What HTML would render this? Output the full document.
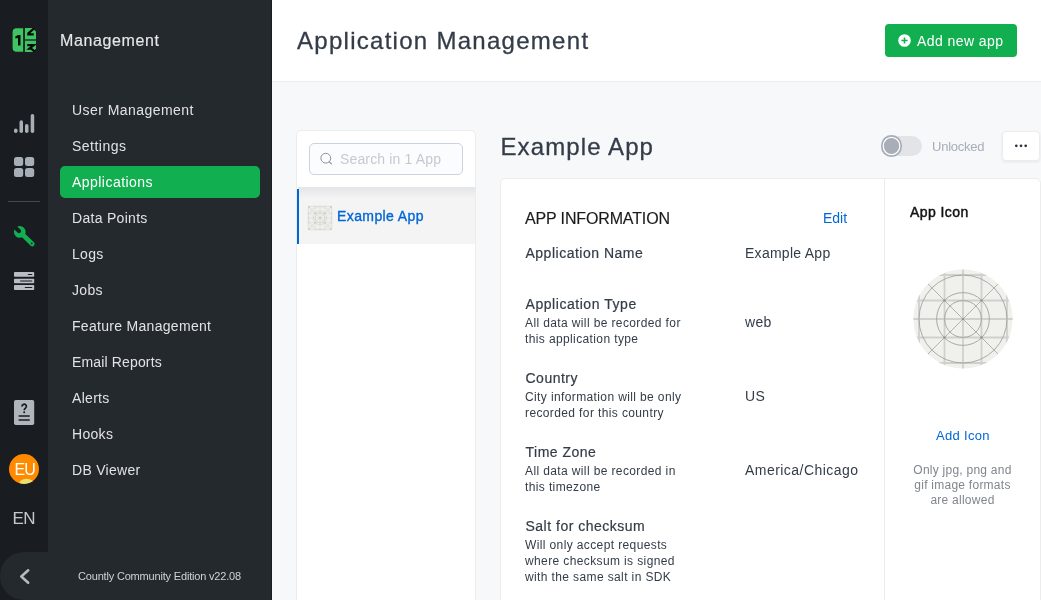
<!DOCTYPE html>
<html><head><meta charset="utf-8">
<style>
*{box-sizing:border-box;margin:0;padding:0}
html,body{width:1041px;height:600px;overflow:hidden;-webkit-font-smoothing:antialiased;background:#F7F8FA;font-family:"Liberation Sans",sans-serif}
.abs{position:absolute}
.t{position:absolute;white-space:nowrap;line-height:1}
#iconbar{left:0;top:0;width:48px;height:600px;background:#191C20}
#submenu{left:48px;top:0;width:224px;height:600px;background:#24292E}
#shadow{left:271px;top:0;width:1px;height:600px;background:#1a1d21}
#collapse{left:0;top:552px;width:60px;height:48px;background:#24292E;border-radius:24px 0 0 24px}
.mi{position:absolute;left:72px;font-size:14px;color:#E1E2E4;white-space:nowrap;line-height:1}
#active{left:60px;top:166px;width:200px;height:32px;background:#12AF51;border-radius:5px}
#header{left:272px;top:0;width:769px;height:82px;background:#fff;border-bottom:1px solid #ECECEC}
#listpanel{left:296px;top:130px;width:180px;height:480px;background:#fff;border:1px solid #ECECEC;border-radius:5px}
#search{left:309px;top:143px;width:154px;height:32px;background:#FBFCFD;border:1px solid #CBD2E0;border-radius:5px}
#sel{left:298px;top:187px;width:177px;height:57px;background:#F4F4F4}
#selshadow{left:298px;top:187px;width:177px;height:12px;background:linear-gradient(#E4E5E7,#F4F4F4)}
#selbar{left:297px;top:189px;width:2px;height:55px;background:#0166D6}
#card{left:500px;top:178px;width:541px;height:440px;background:#fff;border:1px solid #ECECEC;border-radius:5px}
#divider{left:884px;top:179px;width:1px;height:421px;background:#ECECEC}
.lbl{position:absolute;left:525.5px;font-size:14px;color:#333C48;-webkit-text-stroke:0.2px #333C48;white-space:nowrap;line-height:1}
.desc{position:absolute;left:525px;font-size:12px;color:#333C48;white-space:nowrap;line-height:16px}
.val{position:absolute;left:745px;font-size:14px;color:#333C48;white-space:nowrap;line-height:1}
</style></head><body><div id="root" style="position:absolute;left:0;top:0;width:1041px;height:600px;will-change:transform">
<div id="iconbar" class="abs"></div>
<div id="submenu" class="abs"></div>
<div id="collapse" class="abs"></div>
<div id="shadow" class="abs"></div>

<!-- logo -->
<svg class="abs" style="left:12px;top:28px" width="24" height="24" viewBox="0 0 24 24">
 <path d="M4.5 0.2 H11.3 V23.8 H4.5 Q0.6 23.8 0.6 19.8 V4.2 Q0.6 0.2 4.5 0.2Z" fill="#3EC462"/>
 <path d="M12.8 0 H20.5 L24 3.5 V11.2 H12.8Z" fill="#3EC462"/>
 <path d="M12.8 12.8 H24 V20.5 L20.8 24 H12.8Z" fill="#3EC462"/>
 <path d="M11.3 0 H12.8 V24 H11.3Z" fill="#1E2A22"/>
 <path d="M12.8 11.2 H24 V12.8 H12.8Z" fill="#2A5A3A"/>
 <path d="M3.4 8.2 L6.3 7 H8.5 V17.4 H6 V9.9 L3.4 10.4Z" fill="#0A0A0A"/>
 <path d="M21.8 0.6 L16 5.6 M15.2 6.3 H21.7" stroke="#0A0A0A" stroke-width="2.2" fill="none"/>
 <path d="M15.2 17.2 H21.6 L17.4 20.6 H19.2 L22.6 23.6" stroke="#0A0A0A" stroke-width="2.2" fill="none"/>
</svg>

<div class="t" style="left:60px;top:33px;font-size:16px;color:#E6E7E8;letter-spacing:0.62px;-webkit-text-stroke:0.15px #E6E7E8">Management</div>

<!-- icons -->
<svg class="abs" style="left:12px;top:112px" width="24" height="24" viewBox="0 0 24 24">
 <g fill="#A8AEB6"><rect x="2" y="16.5" width="3.5" height="4.5" rx="1.75"/><rect x="7.5" y="8.3" width="3.5" height="12.7" rx="1.75"/><rect x="13" y="12" width="3.5" height="9" rx="1.75"/><rect x="18.7" y="2" width="3.5" height="19" rx="1.75"/></g>
</svg>
<svg class="abs" style="left:12px;top:155px" width="24" height="24" viewBox="0 0 24 24">
 <g fill="#A8AEB6"><rect x="2" y="2" width="9.2" height="9.1" rx="2.5"/><rect x="13" y="2" width="9.2" height="9.1" rx="2.5"/><rect x="2" y="13" width="9.2" height="9" rx="2.5"/><rect x="13" y="13" width="9.2" height="9" rx="2.5"/></g>
</svg>
<div class="abs" style="left:8px;top:201px;width:32px;height:1px;background:#45484C"></div>

<div id="active" class="abs"></div>
<div class="mi" style="top:103px;letter-spacing:0.44px">User Management</div>
<div class="mi" style="top:139px;letter-spacing:0.49px">Settings</div>
<div class="mi" style="top:175px;letter-spacing:0.46px;color:#fff">Applications</div>
<div class="mi" style="top:211px;letter-spacing:0.3px">Data Points</div>
<div class="mi" style="top:247px;letter-spacing:0.3px">Logs</div>
<div class="mi" style="top:283px;letter-spacing:0.3px">Jobs</div>
<div class="mi" style="top:319px;letter-spacing:0.3px">Feature Management</div>
<div class="mi" style="top:355px;letter-spacing:0.15px">Email Reports</div>
<div class="mi" style="top:391px;letter-spacing:0.3px">Alerts</div>
<div class="mi" style="top:427px;letter-spacing:0.3px">Hooks</div>
<div class="mi" style="top:463px;letter-spacing:0.3px">DB Viewer</div>
<div class="t" style="left:78px;top:571px;font-size:11px;color:#D0D1D3;letter-spacing:-0.18px">Countly Community Edition v22.08</div>

<div id="header" class="abs"></div>
<div class="t" style="left:297px;top:28.5px;font-size:24px;color:#333C48;letter-spacing:1.28px;-webkit-text-stroke:0.3px #333C48">Application Management</div>

<div id="listpanel" class="abs"></div>
<div id="search" class="abs"></div>
<div id="sel" class="abs"></div>
<div id="selshadow" class="abs"></div>
<div id="selbar" class="abs"></div>

<div class="t" style="left:500.5px;top:134.5px;font-size:24px;color:#333C48;letter-spacing:1.1px;-webkit-text-stroke:0.3px #333C48">Example App</div>
<div id="card" class="abs"></div>
<div id="divider" class="abs"></div>

<!-- add new app button -->
<div class="abs" style="left:885px;top:24px;width:132px;height:33px;background:#12AF51;border-radius:4px"></div>
<svg class="abs" style="left:898px;top:34px" width="13" height="13" viewBox="0 0 13 13"><circle cx="6.5" cy="6.5" r="6.3" fill="#fff"/><path d="M6.5 3.4V9.6M3.4 6.5H9.6" stroke="#12AF51" stroke-width="1.6"/></svg>
<div class="t" style="left:917px;top:34px;font-size:14px;color:#fff;letter-spacing:0.43px">Add new app</div>

<!-- search -->
<svg class="abs" style="left:319px;top:151px" width="14" height="14" viewBox="0 0 14 14"><circle cx="6.8" cy="7.2" r="4.9" fill="none" stroke="#8A8F96" stroke-width="1"/><path d="M10.4 10.8L12.4 12.8" stroke="#8A8F96" stroke-width="1.1" stroke-linecap="round"/></svg>
<div class="t" style="left:340px;top:152px;font-size:14px;color:#C6C9CE;letter-spacing:0.15px">Search in 1 App</div>

<!-- list item -->
<svg class="abs" style="left:307px;top:205px" width="26" height="26" viewBox="0 0 26 26">
 <defs><clipPath id="li"><rect x="0.3" y="0.3" width="25.4" height="25.4" rx="3.5"/></clipPath></defs>
 <rect x="0.3" y="0.3" width="25.4" height="25.4" rx="3.5" fill="#EFEFEC"/>
 <g clip-path="url(#li)" fill="none">
  <path d="M1.4 0V26M8.2 0V26M13 0V26M17.8 0V26M24.6 0V26M0 1.4H26M0 8.2H26M0 13H26M0 17.8H26M0 24.6H26" stroke="#DDDDD9" stroke-width="0.7"/>
  <path d="M0 0L26 26M26 0L0 26" stroke="#CACAC6" stroke-width="0.5"/>
  <circle cx="13" cy="13" r="11.6" stroke="#D2D2CE" stroke-width="0.5"/><circle cx="13" cy="13" r="6.8" stroke="#CACAC6" stroke-width="0.5"/><circle cx="13" cy="13" r="4.8" stroke="#CACAC6" stroke-width="0.5"/>
 </g>
 <g fill="#B8B8B4"><circle cx="13" cy="13" r="0.7"/><circle cx="8.2" cy="8.2" r="0.6"/><circle cx="17.8" cy="8.2" r="0.6"/><circle cx="8.2" cy="17.8" r="0.6"/><circle cx="17.8" cy="17.8" r="0.6"/><circle cx="2.2" cy="2.2" r="0.6"/><circle cx="23.8" cy="2.2" r="0.6"/><circle cx="2.2" cy="23.8" r="0.6"/><circle cx="23.8" cy="23.8" r="0.6"/></g>
</svg>
<div class="t" style="left:337px;top:209px;font-size:14px;color:#0166D6;letter-spacing:0.4px;-webkit-text-stroke:0.35px #0166D6">Example App</div>

<!-- toggle -->
<div class="abs" style="left:882px;top:136px;width:40px;height:20px;background:#E2E4E8;border-radius:10px"></div>
<div class="abs" style="left:881px;top:135.3px;width:21.3px;height:21.3px;background:#A7AEB8;border-radius:50%;box-shadow:inset 0 0 0 1.7px #A7AEB8,inset 0 0 0 2.9px #fff"></div>
<div class="t" style="left:932px;top:140px;font-size:13px;color:#A7AEB8;letter-spacing:-0.24px">Unlocked</div>
<div class="abs" style="left:1002px;top:131px;width:38px;height:30px;background:#fff;border-radius:4px;border:1px solid #ECEDEF;box-shadow:0 1px 3px rgba(0,0,0,0.08)"></div>
<svg class="abs" style="left:1013px;top:143px" width="16" height="6" viewBox="0 0 16 6"><g fill="#2A3340"><circle cx="3.3" cy="2.8" r="1.35"/><circle cx="8" cy="2.8" r="1.35"/><circle cx="12.7" cy="2.8" r="1.35"/></g></svg>

<!-- card content -->
<div class="t" style="left:525px;top:211px;font-size:16px;color:#1A1A1A;letter-spacing:-0.14px;-webkit-text-stroke:0.15px #1A1A1A">APP INFORMATION</div>
<div class="t" style="left:823px;top:211px;font-size:14px;color:#0166D6">Edit</div>
<div class="lbl" style="top:246px;letter-spacing:0.5px">Application Name</div>
<div class="val" style="top:246px;letter-spacing:0.27px">Example App</div>

<div class="lbl" style="top:297px;letter-spacing:0.55px">Application Type</div>
<div class="desc" style="top:315px;letter-spacing:0.38px">All data will be recorded for<br>this application type</div>
<div class="val" style="top:315px;letter-spacing:0.27px">web</div>

<div class="lbl" style="top:371px;letter-spacing:0.5px">Country</div>
<div class="desc" style="top:389px;letter-spacing:0.38px">City information will be only<br>recorded for this country</div>
<div class="val" style="top:389px;letter-spacing:0.27px">US</div>

<div class="lbl" style="top:445px;letter-spacing:0.5px">Time Zone</div>
<div class="desc" style="top:463px;letter-spacing:0.38px">All data will be recorded in<br>this timezone</div>
<div class="val" style="top:463px;letter-spacing:0.46px">America/Chicago</div>

<div class="lbl" style="top:519px;letter-spacing:0.5px">Salt for checksum</div>
<div class="desc" style="top:537px;letter-spacing:0.38px">Will only accept requests<br>where checksum is signed<br>with the same salt in SDK</div>

<!-- right column -->
<div class="t" style="left:910px;top:205px;font-size:14px;color:#111;letter-spacing:0.42px;-webkit-text-stroke:0.45px #111">App Icon</div>
<svg class="abs" style="left:913px;top:269px" width="100" height="100" viewBox="-50 -50 100 100">
 <defs><clipPath id="cc"><circle r="49.6"/></clipPath></defs>
 <circle r="49.6" fill="#F0F0EC"/>
 <g clip-path="url(#cc)" fill="none">
  <path d="M-18.5 -50V50M0 -50V50M18.5 -50V50M-50 -18.5H50M-50 0H50M-50 18.5H50M-44 -50V50M44 -50V50M-50 -44H50M-50 44H50" stroke="#D0D0CC" stroke-width="1.8"/>
  <path d="M-50 -50L50 50M50 -50L-50 50" stroke="#A2A29E" stroke-width="0.8"/>
  <circle r="44" stroke="#A2A29E" stroke-width="0.9"/>
  <circle r="26.4" stroke="#A2A29E" stroke-width="0.9"/>
  <circle r="18.4" stroke="#A2A29E" stroke-width="0.9"/>
 </g>
 <g fill="#8A8A86"><circle r="1.1"/><circle cx="-18.5" cy="-18.5" r="1.1"/><circle cx="18.5" cy="-18.5" r="1.1"/><circle cx="-18.5" cy="18.5" r="1.1"/><circle cx="18.5" cy="18.5" r="1.1"/></g>
</svg>
<div class="t" style="left:936px;top:429px;font-size:13px;color:#0166D6;letter-spacing:0.31px">Add Icon</div>
<div class="abs" style="left:885px;top:463px;width:155px;text-align:center;font-size:12px;line-height:15px;color:#81868D;letter-spacing:0.25px">Only jpg, png and<br>gif image formats<br>are allowed</div>

<!-- sidebar icons -->
<svg class="abs" style="left:12px;top:225px" width="24" height="24" viewBox="0 0 24 24">
 <g transform="translate(7.8 6.9) rotate(44)">
  <circle r="5.9" fill="#12AF51"/>
  <path d="M0 -2.3 H17.4 A2.3 2.3 0 0 1 17.4 2.3 H0Z" fill="#12AF51"/>
  <path d="M-8 -2.1 H-1.2 A2.1 2.1 0 0 1 -1.2 2.1 H-8Z" fill="#191C20"/>
  <circle cx="16.6" cy="0" r="0.95" fill="#191C20"/>
 </g>
</svg>
<svg class="abs" style="left:12px;top:270px" width="24" height="22" viewBox="0 0 24 22">
 <g fill="#B9BDC4"><rect x="2" y="2" width="20.2" height="4.8" rx="0.8"/><rect x="2" y="8.7" width="20.2" height="4.6" rx="0.8"/><rect x="2" y="15" width="20.2" height="5" rx="0.8"/></g>
 <g stroke="#191C20" stroke-width="1.2" stroke-linecap="round"><path d="M16.3 4.5H19.7M8.6 11H19.7M13.3 17.5H19.7"/></g>
</svg>
<svg class="abs" style="left:12px;top:398px" width="24" height="30" viewBox="0 0 24 30">
 <rect x="2" y="2" width="20.2" height="25" rx="1.8" fill="#B0B5BC"/>
 <path d="M10 8.6 A2.2 2.2 0 1 1 13.4 10.3 Q12.2 11 12.2 12.3" stroke="#191C20" stroke-width="1.7" fill="none"/>
 <circle cx="12.2" cy="14.2" r="1" fill="#191C20"/>
 <path d="M7.2 18H17.2M7.2 22H17.2" stroke="#191C20" stroke-width="1.6" stroke-linecap="round"/>
</svg>
<svg class="abs" style="left:9px;top:453.7px" width="30" height="30" viewBox="0 0 30 30">
 <defs><clipPath id="av"><circle cx="15" cy="15" r="15"/></clipPath></defs>
 <circle cx="15" cy="15" r="15" fill="#FF8A00"/>
 <ellipse cx="17.6" cy="30.3" rx="7.6" ry="5.6" fill="#EAE070" clip-path="url(#av)"/>
</svg>
<div class="t" style="left:14.5px;top:461.5px;font-size:16px;color:#fff;letter-spacing:-0.9px">EU</div>
<div class="t" style="left:12.5px;top:509.5px;font-size:17px;color:#C4C7CC;letter-spacing:-0.5px">EN</div>
<svg class="abs" style="left:18px;top:566px" width="14" height="20" viewBox="0 0 14 20"><path d="M10.2 4.3L3.3 10.5L10.2 16.7" stroke="#B4BAC4" stroke-width="2.6" fill="none" stroke-linecap="round" stroke-linejoin="round"/></svg>
</div></body></html>
